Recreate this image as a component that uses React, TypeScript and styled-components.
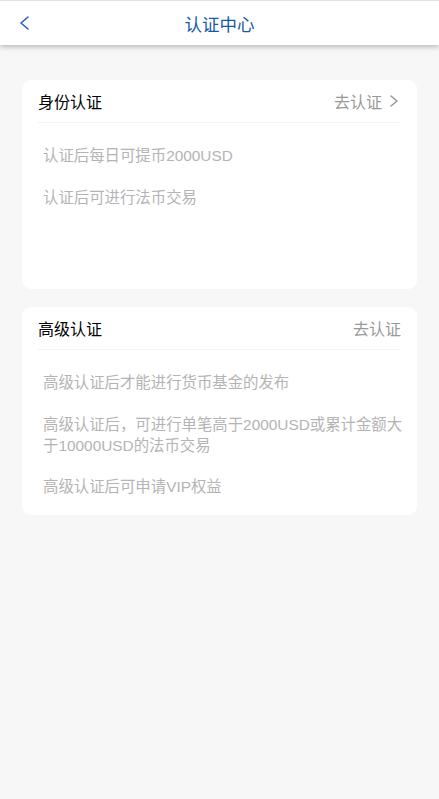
import * as React from 'react';
import styled, { createGlobalStyle } from 'styled-components';

const GlobalStyle = createGlobalStyle`
    html, body {
        margin: 0;
        padding: 0;
        background: #f7f7f7;
        font-family: 'Liberation Sans', 'Noto Sans CJK SC', sans-serif;
    }
`;

const Page = styled.div`
    min-height: 799px;
    background: #f7f7f7;
`;

const HeaderBar = styled.header`
    position: relative;
    height: 44px;
    border-top: 1px solid #e2e2e2;
    background: #fff;
    box-shadow: 0 2px 5px rgba(0, 0, 0, 0.25);
    display: flex;
    align-items: center;
    justify-content: center;
`;

const BackButton = styled.button`
    position: absolute;
    left: 12px;
    top: 0;
    height: 44px;
    width: 24px;
    padding: 0;
    border: 0;
    background: none;
    display: flex;
    align-items: center;
    justify-content: center;
    cursor: pointer;
`;

const Title = styled.h1`
    margin: 0;
    font-size: 17.5px;
    font-weight: 400;
    color: #1459ad;
`;

const Content = styled.main`
    padding: 35px 22px;
    display: flex;
    flex-direction: column;
    gap: 18px;
`;

const Card = styled.section<{ $minHeight?: number }>`
    background: #fff;
    border-radius: 9px;
    min-height: ${(p) => (p.$minHeight ? `${p.$minHeight}px` : 'auto')};
    padding-bottom: 18px;
    box-sizing: border-box;
`;

const CardHead = styled.div`
    margin: 0 16px;
    height: 42px;
    border-bottom: 1px solid #f3f3f3;
    display: flex;
    align-items: center;
    justify-content: space-between;
`;

const CardTitle = styled.span`
    font-size: 16px;
    color: #000;
`;

const Action = styled.a`
    display: flex;
    align-items: center;
    gap: 8px;
    font-size: 16px;
    color: #999;
    text-decoration: none;

    svg {
        margin-right: 3px;
    }
`;

const Items = styled.ul`
    list-style: none;
    margin: 0;
    padding: 22px 10px 0 21px;
    display: flex;
    flex-direction: column;
    gap: 20.5px;
`;

const Item = styled.li`
    font-size: 15.4px;
    line-height: 21px;
    color: #b4b4b4;
`;

const Chevron = ({ dir, color, w, h }: { dir: 'left' | 'right'; color: string; w: number; h: number }) => (
    <svg width={w} height={h} viewBox={`0 0 ${w} ${h}`} fill="none">
        <polyline
            points={dir === 'left' ? `${w - 1},1 1,${h / 2} ${w - 1},${h - 1}` : `1,1 ${w - 1},${h / 2} 1,${h - 1}`}
            stroke={color}
            strokeWidth="1.6"
            strokeLinecap="round"
            strokeLinejoin="round"
        />
    </svg>
);

interface CertCardProps {
    title: string;
    items: string[];
    arrow?: boolean;
    minHeight?: number;
}

const CertCard: React.FC<CertCardProps> = ({ title, items, arrow, minHeight }) => (
    <Card $minHeight={minHeight}>
        <CardHead>
            <CardTitle>{title}</CardTitle>
            <Action href="#">
                去认证
                {arrow && <Chevron dir="right" color="#999" w={8} h={12} />}
            </Action>
        </CardHead>
        <Items>
            {items.map((t) => (
                <Item key={t}>{t}</Item>
            ))}
        </Items>
    </Card>
);

export default function App() {
    return (
        <Page>
            <GlobalStyle />
            <HeaderBar>
                <BackButton aria-label="back">
                    <Chevron dir="left" color="#2a5bc8" w={9} h={14} />
                </BackButton>
                <Title>认证中心</Title>
            </HeaderBar>
            <Content>
                <CertCard
                    title="身份认证"
                    arrow
                    minHeight={209}
                    items={['认证后每日可提币2000USD', '认证后可进行法币交易']}
                />
                <CertCard
                    title="高级认证"
                    items={[
                        '高级认证后才能进行货币基金的发布',
                        '高级认证后，可进行单笔高于2000USD或累计金额大于10000USD的法币交易',
                        '高级认证后可申请VIP权益',
                    ]}
                />
            </Content>
        </Page>
    );
}
